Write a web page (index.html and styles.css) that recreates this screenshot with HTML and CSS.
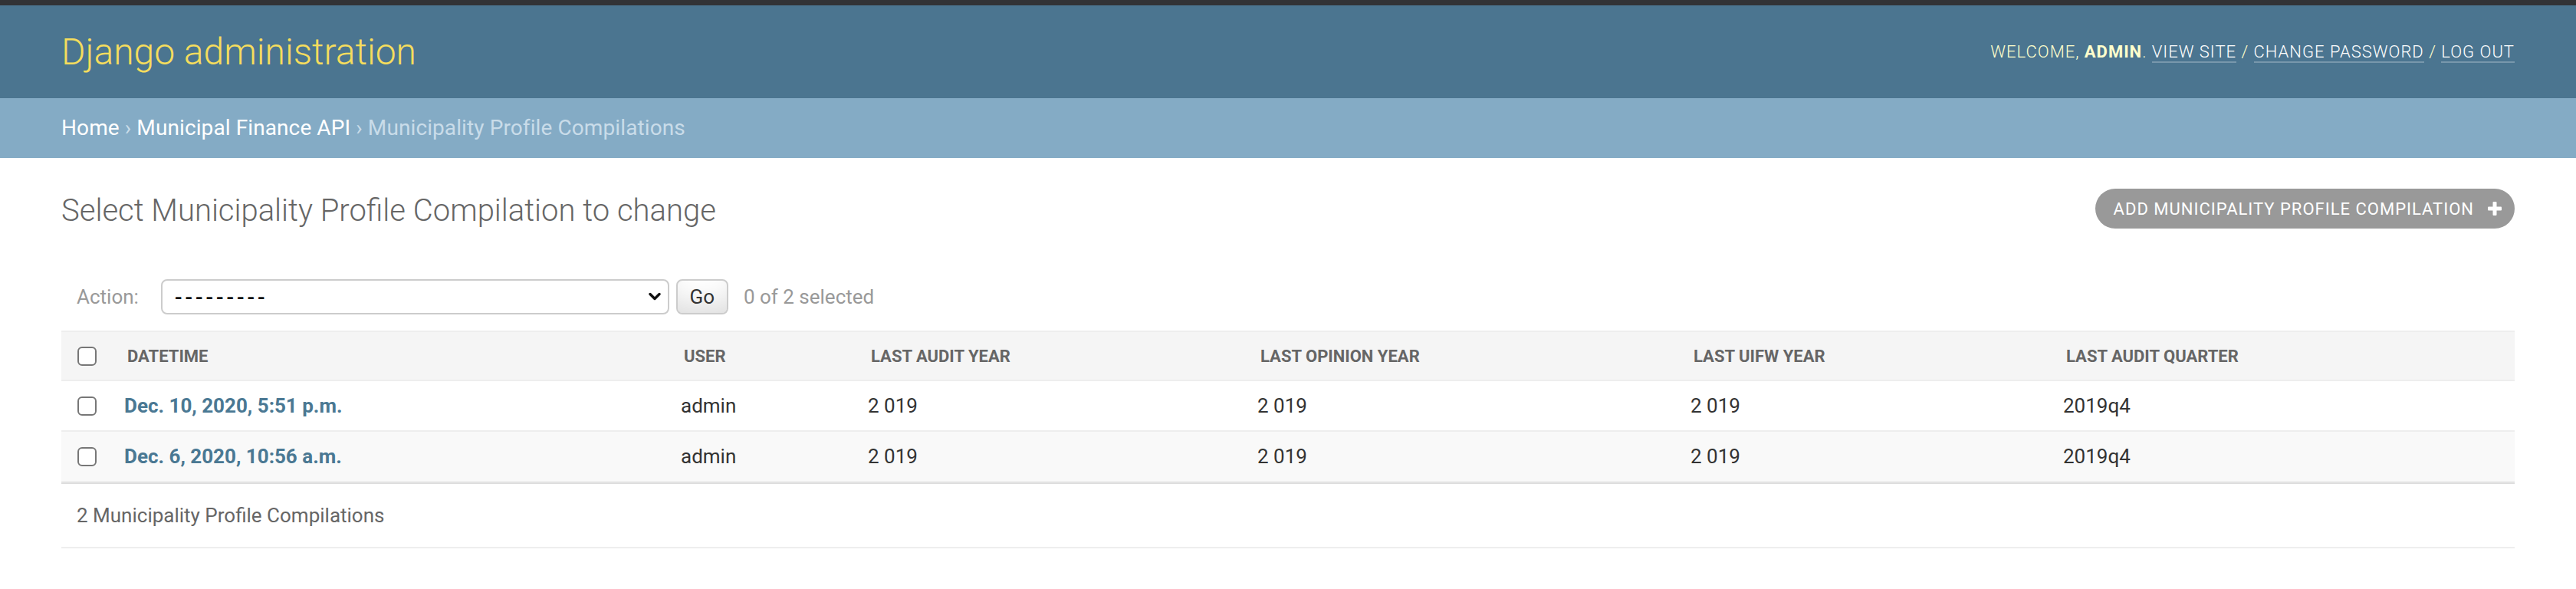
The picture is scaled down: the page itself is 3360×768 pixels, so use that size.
FILE: index.html
```html
<!DOCTYPE html>
<html lang="en">
<head>
<meta charset="utf-8">
<title>Select Municipality Profile Compilation to change | Django site admin</title>
<link rel="stylesheet" href="styles.css">
</head>
<body>
<div class="topbar"></div>
<header class="header">
  <div class="branding"><h1 class="site-name">Django administration</h1></div>
  <div class="user-tools">Welcome, <strong>admin</strong>. <a href="#">View site</a> / <a href="#">Change password</a> / <a href="#">Log out</a></div>
</header>
<nav class="breadcrumbs"><a href="#">Home</a> › <a href="#">Municipal Finance API</a> › Municipality Profile Compilations</nav>
<main class="content">
  <div class="title-row">
    <h1 class="page-title">Select Municipality Profile Compilation to change</h1>
    <a class="addlink" href="#">Add municipality profile compilation
      <svg class="plus" viewBox="0 0 18 18" width="18" height="18" aria-hidden="true"><rect x="6.5" y="0" width="5" height="18" rx="1" fill="#fff"/><rect x="0" y="6.5" width="18" height="5" rx="1" fill="#fff"/></svg>
    </a>
  </div>
  <div class="actions">
    <label class="action-label">Action:</label>
    <div class="select-wrap">
      <select class="action-select"><option>---------</option></select>
      <svg class="chevron" viewBox="0 0 16 12" width="16" height="12" aria-hidden="true"><path d="M2 2.5 L8 8.5 L14 2.5" fill="none" stroke="#111" stroke-width="3.4" stroke-linecap="round" stroke-linejoin="round"/></svg>
    </div>
    <button class="go-btn" type="button">Go</button>
    <span class="counter">0 of 2 selected</span>
  </div>
  <table class="results">
    <colgroup>
      <col class="c-check"><col class="c-datetime"><col class="c-user"><col class="c-audit"><col class="c-opinion"><col class="c-uifw"><col class="c-quarter">
    </colgroup>
    <thead>
      <tr>
        <th class="check-col"><input type="checkbox" class="cb"></th>
        <th>Datetime</th>
        <th>User</th>
        <th>Last audit year</th>
        <th>Last opinion year</th>
        <th>Last UIFW year</th>
        <th>Last audit quarter</th>
      </tr>
    </thead>
    <tbody>
      <tr class="row1">
        <td class="check-col"><input type="checkbox" class="cb"></td>
        <td><a class="rowlink" href="#">Dec. 10, 2020, 5:51 p.m.</a></td>
        <td>admin</td>
        <td>2 019</td>
        <td>2 019</td>
        <td>2 019</td>
        <td>2019q4</td>
      </tr>
      <tr class="row2">
        <td class="check-col"><input type="checkbox" class="cb"></td>
        <td><a class="rowlink" href="#">Dec. 6, 2020, 10:56 a.m.</a></td>
        <td>admin</td>
        <td>2 019</td>
        <td>2 019</td>
        <td>2 019</td>
        <td>2019q4</td>
      </tr>
    </tbody>
  </table>
  <p class="paginator">2 Municipality Profile Compilations</p>
</main>
</body>
</html>
```
FILE: styles.css
```css
html, body {
  margin: 0;
  padding: 0;
  background: #fff;
}
body {
  font-family: Roboto, "Liberation Sans", Arial, sans-serif;
  color: #333;
  overflow: hidden;
}
.topbar {
  height: 7px;
  background: #323336;
}
.header {
  height: 121px;
  box-sizing: border-box;
  padding: 0 80px;
  display: flex;
  justify-content: space-between;
  align-items: center;
  background: #4b7590;
}
.site-name {
  margin: 0;
  font-size: 48px;
  font-weight: 300;
  line-height: 1;
  color: #f5dd5d;
}
.user-tools {
  font-size: 22px;
  font-weight: 300;
  letter-spacing: 1px;
  text-transform: uppercase;
  color: #ffc;
}
.user-tools strong {
  font-weight: 700;
}
.user-tools a {
  color: #fff;
  text-decoration: none;
  border-bottom: 2px solid rgba(255, 255, 255, 0.25);
}
.breadcrumbs {
  padding: 20px 80px;
  font-size: 28px;
  line-height: 38px;
  letter-spacing: 0.1px;
  background: #84abc5;
  color: #c9dce9;
}
.breadcrumbs a {
  color: #fff;
  text-decoration: none;
}
.content {
  padding: 40px 80px;
}
.title-row {
  display: flex;
  justify-content: space-between;
  align-items: flex-start;
  margin-bottom: 39px;
}
.page-title {
  margin: 0;
  font-size: 40px;
  font-weight: 300;
  line-height: 58px;
  color: #666;
}
.addlink {
  display: flex;
  align-items: center;
  gap: 18px;
  height: 52px;
  box-sizing: border-box;
  padding: 0 17px 0 24px;
  background: #999;
  border-radius: 30px;
  color: #fff;
  font-size: 22px;
  font-weight: 400;
  letter-spacing: 1px;
  text-transform: uppercase;
  text-decoration: none;
}
.plus {
  display: block;
  flex: none;
}
.actions {
  display: flex;
  align-items: center;
  padding: 20px;
  height: 88px;
  box-sizing: border-box;
  font-size: 26px;
  color: #999;
}
.select-wrap {
  position: relative;
  margin-left: 29px;
  width: 663px;
  height: 46px;
}
.action-select {
  -webkit-appearance: none;
  appearance: none;
  width: 100%;
  height: 46px;
  box-sizing: border-box;
  margin: 0;
  padding: 0 0 0 16px;
  border: 2px solid #ccc;
  border-radius: 8px;
  background: #fff;
  color: #000;
  font-family: Roboto, "Liberation Sans", Arial, sans-serif;
  font-size: 28px;
  font-weight: 500;
  letter-spacing: 4px;
}
.chevron {
  position: absolute;
  right: 11px;
  top: 17px;
  pointer-events: none;
}
.go-btn {
  margin: 0 0 0 9px;
  width: 68px;
  height: 46px;
  box-sizing: border-box;
  padding: 0;
  border: 2px solid #ccc;
  border-radius: 8px;
  background: #fff;
  box-shadow: 0 -30px 40px -20px rgba(0, 0, 0, 0.15) inset;
  color: #333;
  font-family: Roboto, "Liberation Sans", Arial, sans-serif;
  font-size: 26px;
}
.counter {
  margin-left: 20px;
}
.results {
  width: 100%;
  border-collapse: collapse;
  table-layout: fixed;
}
.c-check { width: 66px; }
.c-datetime { width: 726px; }
.c-user { width: 244px; }
.c-audit { width: 508px; }
.c-opinion { width: 565px; }
.c-uifw { width: 486px; }
.c-quarter { width: 605px; }
.results thead th {
  height: 62px;
  padding: 0 20px;
  background: #f5f5f5;
  border-top: 2px solid #eee;
  border-bottom: 2px solid #eee;
  font-size: 22px;
  font-weight: 700;
  color: #666;
  text-align: left;
  text-transform: uppercase;
  vertical-align: middle;
}
.results tbody td {
  height: 64px;
  padding: 0 16px;
  border-bottom: 2px solid #eee;
  font-size: 26px;
  color: #333;
  vertical-align: middle;
}
.results .check-col {
  padding: 0;
  text-align: center;
}
.row2 td {
  background: #f9f9f9;
}
.cb {
  -webkit-appearance: none;
  appearance: none;
  display: block;
  margin: 0 auto;
  width: 25px;
  height: 25px;
  box-sizing: border-box;
  border: 2px solid #777;
  border-radius: 6px;
  background: #fff;
}
.rowlink {
  color: #4a7893;
  font-weight: 700;
  text-decoration: none;
}
.paginator {
  margin: 0;
  padding: 20px;
  line-height: 42px;
  font-size: 26px;
  color: #666;
  border-top: 2px solid #ddd;
  border-bottom: 2px solid #eee;
}
```
